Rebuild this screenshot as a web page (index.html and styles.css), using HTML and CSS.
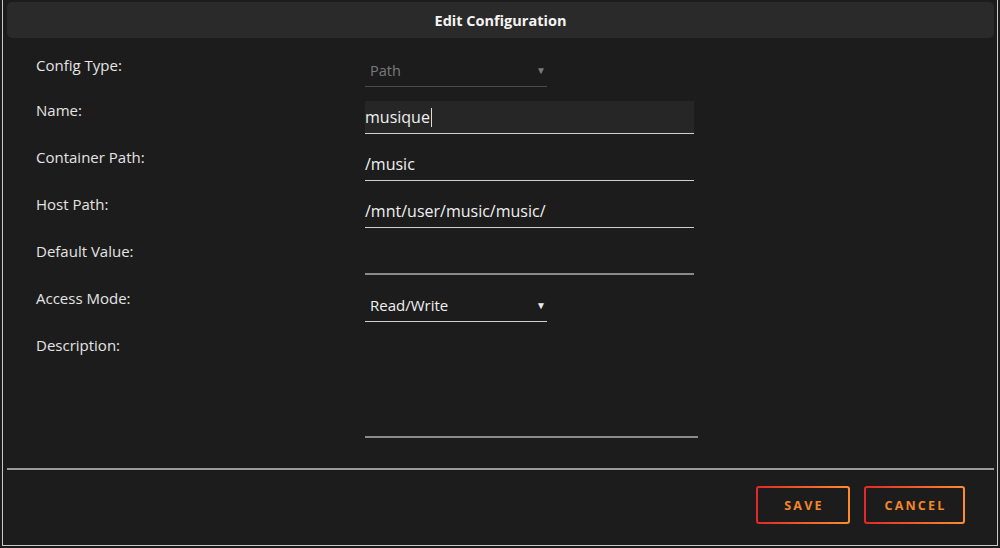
FILE: index.html
```html
<!DOCTYPE html>
<html lang="en">
<head>
<meta charset="utf-8">
<title>Edit Configuration</title>
<link rel="stylesheet" href="styles.css">
</head>
<body>
<div class="frame">
  <div class="titlebar">Edit Configuration</div>
  <form class="form">
    <div class="row first">
      <label class="label">Config Type:</label>
      <div class="field select disabled"><span>Path</span><span class="arrow">▼</span></div>
    </div>
    <div class="row">
      <label class="label">Name:</label>
      <div class="field input focused"><span>musique</span><span class="caret"></span></div>
    </div>
    <div class="row">
      <label class="label">Container Path:</label>
      <div class="field input"><span>/music</span></div>
    </div>
    <div class="row">
      <label class="label">Host Path:</label>
      <div class="field input"><span>/mnt/user/music/music/</span></div>
    </div>
    <div class="row">
      <label class="label">Default Value:</label>
      <div class="field input empty"></div>
    </div>
    <div class="row">
      <label class="label">Access Mode:</label>
      <div class="field select"><span>Read/Write</span><span class="arrow">▼</span></div>
    </div>
    <div class="row">
      <label class="label">Description:</label>
      <div class="field textarea"></div>
    </div>
  </form>
  <div class="divider"></div>
  <div class="actions">
    <button class="btn save" type="button">SAVE</button>
    <button class="btn cancel" type="button">CANCEL</button>
  </div>
</div>
</body>
</html>
```

FILE: styles.css
```css
html, body {
  margin: 0;
  padding: 0;
  background: #1c1c1c;
}
body {
  width: 1000px;
  height: 548px;
  overflow: hidden;
  font-family: "Open Sans", "Liberation Sans", sans-serif;
  color: #e6e6e6;
}
.frame {
  box-sizing: border-box;
  margin-left: 2px;
  width: 996px;
  height: 546px;
  border-left: 1px solid #c8c8c8;
  border-right: 1px solid #c8c8c8;
  border-bottom: 1px solid #c8c8c8;
  background: #1c1c1c;
  padding: 2px 3px 0 4px;
  display: flex;
  flex-direction: column;
}
.titlebar {
  height: 36px;
  background: #2a2a2a;
  border-radius: 5px;
  display: flex;
  align-items: center;
  justify-content: center;
  font-weight: 700;
  font-size: 14.5px;
  color: #f4f4f4;
}
.form {
  display: flex;
  flex-direction: column;
  gap: 14px;
  padding: 16px 0 0 29px;
  margin: 0;
}
.row {
  display: flex;
  align-items: flex-start;
}
.label {
  width: 329px;
  font-size: 15px;
  line-height: 19px;
  color: #e4e4e4;
}
.row.first .label {
  padding-top: 2px;
}
.field {
  box-sizing: border-box;
  height: 33px;
  display: flex;
  align-items: center;
  font-size: 16px;
  color: #f0f0f0;
  border-bottom: 1px solid #d0d0d0;
}
.input {
  width: 329px;
  padding-left: 0;
}
.input.focused {
  background: #262626;
}
.input.empty {
  border-bottom: 2px solid #8a8a8a;
}
.caret {
  display: inline-block;
  width: 1px;
  height: 19px;
  background: #dcdcdc;
  margin-left: 1px;
}
.select {
  width: 182px;
  padding: 0 0 0 5px;
  justify-content: space-between;
  font-size: 15px;
}
.select.disabled {
  font-size: 14.5px;
  color: #7a7a7a;
  border-bottom-color: #4a4a4a;
}
.arrow {
  font-size: 10px;
  color: #ececec;
  padding-right: 1px;
}
.select.disabled .arrow {
  color: #7a7a7a;
}
.textarea {
  width: 333px;
  height: 102px;
  border-bottom: 2px solid #8a8a8a;
}
.divider {
  margin-top: 30px;
  height: 2px;
  background: #9a9a9a;
}
.actions {
  display: flex;
  justify-content: flex-end;
  gap: 14px;
  padding: 16px 29px 0 0;
}
.btn {
  box-sizing: border-box;
  height: 38px;
  padding: 0;
  border: 2px solid transparent;
  border-radius: 3px;
  background: linear-gradient(#1c1c1c, #1c1c1c) padding-box,
              linear-gradient(90deg, #e22828, #ff8c2f) border-box;
  color: #f5862a;
  font-family: "Open Sans", "Liberation Sans", sans-serif;
  font-weight: 700;
  font-size: 12.5px;
  letter-spacing: 2.2px;
  text-indent: 2px;
}
.btn.save {
  width: 94px;
}
.btn.cancel {
  width: 101px;
}
```
